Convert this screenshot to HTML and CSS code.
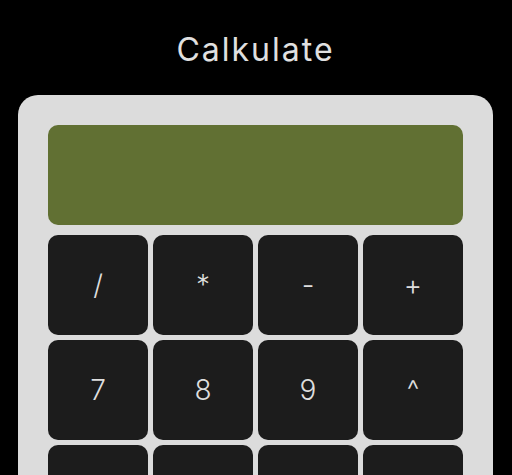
FILE: index.html
```html
<!DOCTYPE html>
<html lang="en">
<head>
<meta charset="utf-8">
<title>Calkulate</title>
<link rel="stylesheet" href="styles.css">
</head>
<body>
<main class="app">
  <h1 class="title">Calkulate</h1>
  <div class="calculator">
    <div class="display"></div>
    <div class="keys">
      <button class="key">/</button>
      <button class="key">*</button>
      <button class="key">-</button>
      <button class="key">+</button>
      <button class="key">7</button>
      <button class="key">8</button>
      <button class="key">9</button>
      <button class="key">^</button>
      <button class="key"></button>
      <button class="key"></button>
      <button class="key"></button>
      <button class="key"></button>
    </div>
  </div>
</main>
</body>
</html>
```
FILE: styles.css
```css
html, body {
  margin: 0;
  padding: 0;
  background: #000;
  overflow: hidden;
}

.app {
  display: flex;
  flex-direction: column;
  align-items: center;
  padding-right: 1px;
  font-family: Inter, "Open Sans", sans-serif;
}

.title {
  margin: 0;
  height: 95px;
  line-height: 99px;
  font-size: 32px;
  font-weight: 400;
  color: #e0e0e0;
  letter-spacing: 2px;
}

.calculator {
  width: 415px;
  padding: 30px;
  background: #dcdcdc;
  border-radius: 20px;
  display: flex;
  flex-direction: column;
  gap: 10px;
}

.display {
  height: 100px;
  background: #617033;
  border-radius: 10px;
}

.keys {
  display: grid;
  grid-template-columns: repeat(4, 100px);
  grid-auto-rows: 100px;
  gap: 5px;
}

.key {
  border: none;
  border-radius: 10px;
  background: #1c1c1c;
  color: #dedede;
  font-family: Inter, "Open Sans", sans-serif;
  font-size: 28px;
  font-weight: 300;
  padding: 0;
}
```
